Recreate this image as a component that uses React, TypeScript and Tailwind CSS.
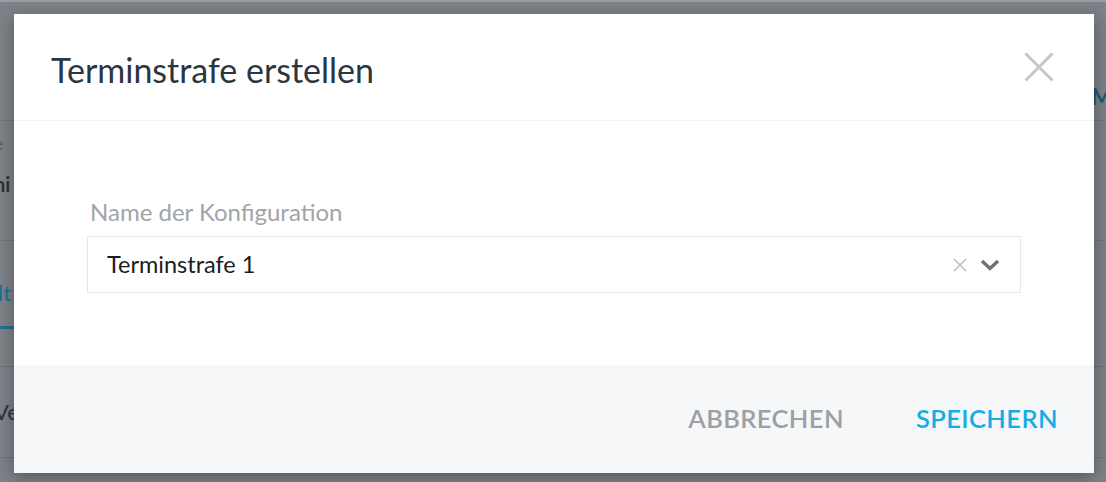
import React from "react";

const font = { fontFamily: "Lato, 'Noto Sans', sans-serif" };

export default function App() {
  return (
    <div className="relative w-[1106px] h-[482px] overflow-hidden bg-[#7e8288]" style={font}>
      {/* dimmed page beneath */}
      <div className="flex flex-col w-full h-full border-t-2 border-[#9a9da2]">
        <div className="h-[119px] flex items-end justify-end pb-[12px] border-b border-[#6f737a]">
          <span className="text-[22px] font-bold text-[#1f5a78] mr-[-6px] leading-none">M</span>
        </div>
        <div className="h-[120px] flex flex-col pt-[13px] border-b border-[#6f737a]">
          <span className="text-[18px] text-[#5c6066] -ml-[6px] leading-none">e</span>
          <span className="text-[20px] font-bold text-[#2e3238] -ml-[6px] mt-[22px] leading-none">hi</span>
        </div>
        <div className="h-[88px] flex items-end">
          <div className="flex flex-col">
            <span className="text-[22px] text-[#1f6f93] -ml-[2px] mb-[22px] leading-none">lt</span>
            <div className="w-[14px] h-[3px] bg-[#1f6f93]" />
          </div>
        </div>
        <div className="h-[38px] border-b border-[#6f737a]" />
        <div className="h-[91px] flex items-center border-b border-[#6f737a]">
          <span className="text-[22px] text-[#2e3238] -ml-[6px] leading-none">Ve</span>
        </div>
        <div className="flex-1" />
      </div>

      {/* modal */}
      <div className="absolute left-[14px] top-[14px] w-[1080px] h-[459px] bg-white flex flex-col shadow-[0_4px_16px_rgba(0,0,0,0.35)]">
        <div className="h-[107px] shrink-0 flex items-center justify-between pl-[37px] pr-[40px] border-b border-[#f0f1f3]">
          <h1 className="text-[34px] text-[#2b3640] leading-none mt-[6px]">Terminstrafe erstellen</h1>
          <svg width="30" height="30" viewBox="0 0 30 30">
            <path d="M1.5 1.5 L28.5 28.5 M28.5 1.5 L1.5 28.5" stroke="#c6c6c6" strokeWidth="3" />
          </svg>
        </div>
        <div className="flex-1 px-[73px] pt-[79px]">
          <label className="block text-[24px] text-[#a0a5aa] leading-none ml-[3px] mb-[12px]">Name der Konfiguration</label>
          <div className="h-[57px] border border-[#e8e9eb] flex items-center pl-[19px] pr-[20px]">
            <span className="flex-1 text-[23.5px] text-[#1c1c1c]">Terminstrafe 1</span>
            <svg width="16" height="16" viewBox="0 0 16 16" className="mr-[12px]">
              <path d="M2 2 L14 14 M14 2 L2 14" stroke="#c0c0c0" strokeWidth="1.6" />
            </svg>
            <svg width="20" height="12" viewBox="0 0 20 12">
              <path d="M2 2 L10 9.5 L18 2" stroke="#707070" strokeWidth="3.4" fill="none" />
            </svg>
          </div>
        </div>
        <div className="h-[108px] shrink-0 bg-[#f6f7f9] flex items-center justify-end pr-[36px] gap-[72px]">
          <button className="text-[25.5px] font-semibold text-[#9ba0a5] tracking-[0.4px] leading-none">ABBRECHEN</button>
          <button className="text-[25.5px] font-semibold text-[#14ade5] tracking-[0.4px] leading-none">SPEICHERN</button>
        </div>
      </div>
    </div>
  );
}
